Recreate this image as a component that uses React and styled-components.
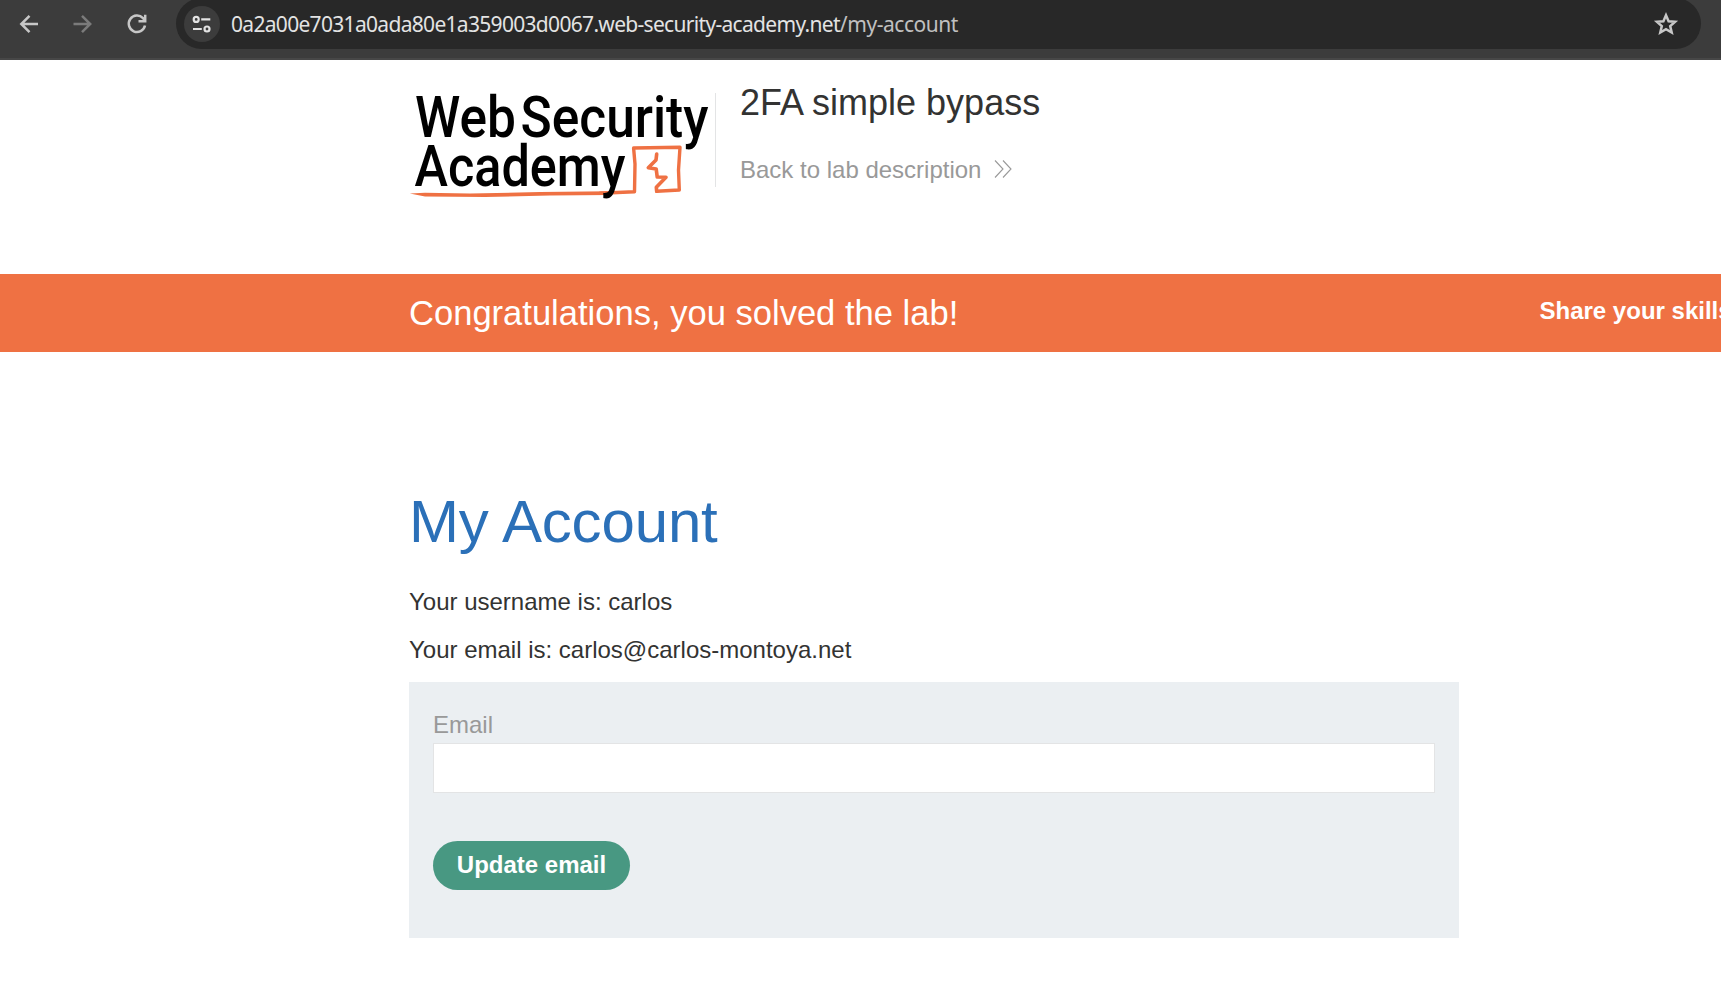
import React from "react";
import styled, { createGlobalStyle } from "styled-components";

const GlobalStyle = createGlobalStyle`
  * { box-sizing: border-box; }
  html, body { margin: 0; padding: 0; background: #fff; overflow: hidden; }
  body {
    font-family: Arial, "Liberation Sans", sans-serif;
    font-size: 24px;
    color: #333332;
  }
  h1, h2, h4, p { margin: 0; font-weight: 400; }
`;

const Page = styled.div`
  width: 100%;
  height: 988px;
  overflow: hidden;
`;

const BrowserBar = styled.div`
  display: flex;
  align-items: flex-start;
  height: 60px;
  background: #3c3c3c;
  border-bottom: 2px solid #474747;
`;

const NavButtons = styled.div`
  display: flex;
  width: 176px;
  height: 47px;
  align-items: center;
  padding-left: 14px;
  gap: 24px;
`;

const NavIcon = styled.svg`
  width: 30px;
  height: 30px;
  fill: none;
  stroke: ${(p) => (p.$dim ? "#7b7b7b" : "#c7c7c7")};
  stroke-width: 2.5;
`;

const Omnibox = styled.div`
  display: flex;
  align-items: center;
  width: 1525px;
  height: 51px;
  margin-top: -2px;
  padding: 0 20px 0 8px;
  border-radius: 26px;
  background: #282828;
`;

const SiteInfo = styled.div`
  display: flex;
  width: 36px;
  height: 36px;
  border-radius: 50%;
  background: #3c3c3c;
`;

const Url = styled.div`
  flex: 1;
  margin-left: 11px;
  font-family: "Segoe UI", "Noto Sans", sans-serif;
  font-size: 21px;
  line-height: 30px;
  letter-spacing: -0.69px;
  color: #e3e3e3;
  white-space: nowrap;
`;

const UrlPath = styled.span`
  letter-spacing: -0.45px;
  color: #c0c0c0;
`;

const Star = styled.svg`
  width: 30px;
  height: 30px;
  fill: none;
  stroke: #c7c7c7;
  stroke-width: 2.5;
`;

const LabHeader = styled.header`
  display: flex;
  height: 214px;
  padding: 33px 0 0 409px;
`;

const Logo = styled.svg`
  width: 306px;
  height: 112px;
  flex: none;
  overflow: visible;
`;

const TitleBlock = styled.div`
  height: 94px;
  border-left: 1px solid #e3e4e5;
  padding-left: 24px;
`;

const LabTitle = styled.h2`
  margin-top: -11px;
  font-size: 36px;
  line-height: 42px;
`;

const BackLink = styled.a`
  display: flex;
  align-items: center;
  margin-top: 32px;
  font-size: 24px;
  line-height: 28px;
  color: #999;
`;

const Chevrons = styled.svg`
  width: 18px;
  height: 18px;
  margin: -2px 0 0 13px;
  fill: none;
  stroke: #999;
  stroke-width: 1.1;
`;

const Banner = styled.section`
  display: flex;
  justify-content: space-between;
  height: 78px;
  padding-left: 409px;
  background: #ef7143;
  color: #fff;
  white-space: nowrap;
  overflow: hidden;
`;

const Solved = styled.h4`
  font-size: 34.56px;
  line-height: 78px;
`;

const Share = styled.div`
  flex: none;
  width: 181.5px;
  font-weight: 700;
  line-height: 74px;
`;

const Account = styled.main`
  width: 1459px;
  padding: 136px 0 0 409px;
`;

const Heading = styled.h1`
  font-size: 60px;
  line-height: 68px;
  letter-spacing: -0.15px;
  color: #2b70b8;
`;

const Info = styled.p`
  line-height: 28px;
  margin-top: ${(p) => p.$gap}px;
`;

const EmailForm = styled.form`
  display: flex;
  flex-direction: column;
  align-items: flex-start;
  height: 256px;
  margin-top: 18px;
  padding: 29px 24px 0;
  background: #ebeff2;
`;

const Label = styled.label`
  line-height: 28px;
  color: #999;
`;

const Input = styled.input`
  width: 100%;
  height: 50px;
  margin-top: 4px;
  border: 1px solid #e3e4e5;
  border-radius: 0;
  background: #fff;
  outline: none;
`;

const Submit = styled.button`
  width: 197px;
  height: 49px;
  margin-top: 48px;
  padding: 0 0 1px;
  border: 0;
  border-radius: 25px;
  background: #489882;
  color: #fff;
  font: 700 24px/48px Arial, "Liberation Sans", sans-serif;
`;

const LogoWord = styled.text`
  font-family: Roboto, sans-serif;
  font-weight: 500;
  font-size: 57px;
  fill: #000;
`;

function AcademyLogo() {
  return (
    <Logo viewBox="409 93 306 112">
      <g fill="none" stroke="#ef7143" strokeLinecap="round" strokeLinejoin="round">
        <path d="M600 193.3L634.5 191.7L635 164L633.6 148L680 147.3L678.5 170L679.3 190L656.7 191.3" strokeWidth="3.4" />
        <path d="M656.7 154L656 160L648.3 167.8L656.2 169L657.2 177L666 177.3L656.3 187.3L656.7 191.3" strokeWidth="3.6" />
      </g>
      <path d="M409.8 193.6L425 192.8L470 193.6L540 192L610 191.2L610 195L550 195.4L485 197L425 196.4Z" fill="#ef7143" />
      <LogoWord x="415" y="137" textLength="101" lengthAdjust="spacingAndGlyphs">Web</LogoWord>
      <LogoWord x="520.5" y="137" textLength="188" lengthAdjust="spacingAndGlyphs">Security</LogoWord>
      <LogoWord x="414.5" y="186" textLength="211" lengthAdjust="spacingAndGlyphs">Academy</LogoWord>
    </Logo>
  );
}

export default function App() {
  return (
    <>
      <GlobalStyle />
      <Page>
        <BrowserBar>
          <NavButtons>
            <NavIcon viewBox="0 0 30 30">
              <path d="M24 15H8M15.5 6.8L7.3 15L15.5 23.2" />
            </NavIcon>
            <NavIcon viewBox="0 0 30 30" $dim>
              <path d="M5.5 15H21.5M14 6.8L22.2 15L14 23.2" />
            </NavIcon>
            <NavIcon viewBox="0 0 30 30">
              <path d="M23 16.5A8.2 8.2 0 1 1 21 9.2L23 11.5M23.2 5.8V12.2H16.5" />
            </NavIcon>
          </NavButtons>
          <Omnibox>
            <SiteInfo>
              <svg width="36" height="36" viewBox="0 0 36 36" fill="none" stroke="#e3e3e3" strokeWidth="2.2">
                <circle cx="12.2" cy="13.4" r="2.5" />
                <path d="M17.2 13.4H26.3M9 23H17.8" />
                <circle cx="23" cy="23" r="2.5" />
              </svg>
            </SiteInfo>
            <Url>
              0a2a00e7031a0ada80e1a359003d0067.web-security-academy.net<UrlPath>/my-account</UrlPath>
            </Url>
            <Star viewBox="0 0 30 30">
              <path d="M15 6.2L17.6 12.2L24.1 12.8L19.2 17.1L20.7 23.5L15 20.1L9.3 23.5L10.8 17.1L5.9 12.8L12.4 12.2Z" />
            </Star>
          </Omnibox>
        </BrowserBar>
        <LabHeader>
          <AcademyLogo />
          <TitleBlock>
            <LabTitle>2FA simple bypass</LabTitle>
            <BackLink>
              Back to lab description
              <Chevrons viewBox="0 0 18 18">
                <path d="M1 0.5L9 9L1 17.5M9 0.5L17 9L9 17.5" />
              </Chevrons>
            </BackLink>
          </TitleBlock>
        </LabHeader>
        <Banner>
          <Solved>Congratulations, you solved the lab!</Solved>
          <Share>Share your skills!</Share>
        </Banner>
        <Account>
          <Heading>My Account</Heading>
          <Info $gap={32}>Your username is: carlos</Info>
          <Info $gap={20}>Your email is: carlos@carlos-montoya.net</Info>
          <EmailForm>
            <Label htmlFor="email">Email</Label>
            <Input id="email" type="email" />
            <Submit type="button">Update email</Submit>
          </EmailForm>
        </Account>
      </Page>
    </>
  );
}
